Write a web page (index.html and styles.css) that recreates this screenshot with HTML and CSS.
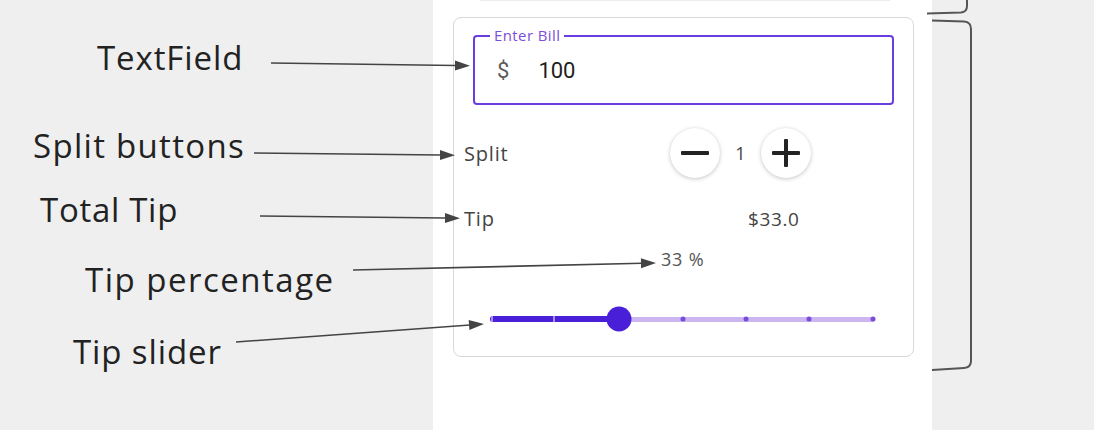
FILE: index.html
```html
<!DOCTYPE html>
<html lang="en">
<head>
<meta charset="utf-8">
<title>Tip calculator anatomy</title>
<link rel="stylesheet" href="styles.css">
</head>
<body>
<div class="page">
  <div class="annot">
    <span class="note note-field">TextField</span>
    <span class="note note-split">Split buttons</span>
    <span class="note note-total">Total Tip</span>
    <span class="note note-pct">Tip percentage</span>
    <span class="note note-slider">Tip slider</span>
  </div>

  <div class="panel">
    <div class="prev-edge"></div>
    <div class="card">
      <div class="field">
        <span class="field-label">Enter Bill</span>
        <span class="field-prefix">$</span>
        <span class="field-value">100</span>
      </div>

      <div class="row split-row">
        <span class="row-label">Split</span>
        <div class="stepper">
          <button class="round-btn" aria-label="decrease"><span class="bar-h"></span></button>
          <span class="count">1</span>
          <button class="round-btn" aria-label="increase"><span class="bar-h"></span><span class="bar-v"></span></button>
        </div>
      </div>

      <div class="row tip-row">
        <span class="row-label">Tip</span>
        <span class="tip-value">$33.0</span>
      </div>

      <div class="pct-row">33 %</div>

      <div class="slider">
        <div class="track"></div>
        <div class="track-active" style="width: 33.4%"></div>
        <span class="tick tick-on" style="left: 0.4%"></span>
        <span class="tick tick-on" style="left: 16.7%"></span>
        <span class="tick tick-off" style="left: 50.1%"></span>
        <span class="tick tick-off" style="left: 66.5%"></span>
        <span class="tick tick-off" style="left: 82.9%"></span>
        <span class="tick tick-off" style="left: 99.5%"></span>
        <span class="thumb" style="left: 33.4%"></span>
      </div>
    </div>
  </div>

  <div class="side"></div>

  <svg class="overlay" width="1094" height="430" viewBox="0 0 1094 430">
    <g class="arrow-line">
      <line x1="271" y1="63" x2="456" y2="65.5"/>
      <line x1="254" y1="153" x2="441" y2="155"/>
      <line x1="260" y1="216" x2="446" y2="218"/>
      <line x1="353" y1="270" x2="642" y2="263.3"/>
      <line x1="236" y1="342" x2="470" y2="325"/>
    </g>
    <g class="arrow-head">
      <polygon points="470,65.7 455,60.5 455,70.5"/>
      <polygon points="455,155.2 440,150 440,160"/>
      <polygon points="460,218.2 445,213 445,223"/>
      <polygon points="656,263 641.1,268.3 640.9,258.3"/>
      <polygon points="484,324 469.4,330 468.7,320"/>
    </g>
    <g class="bracket">
      <path d="M 927 13.5 L 961 12.5 Q 967 12 967 6 L 967 0"/>
      <path d="M 932 20.5 L 964 21.5 Q 971 22 971 29 L 971 361 Q 971 367.5 964 368 L 932 370"/>
    </g>
  </svg>
</div>
</body>
</html>
```

FILE: styles.css
```css
* {
  box-sizing: border-box;
}

html, body {
  margin: 0;
  padding: 0;
}

body {
  width: 1094px;
  height: 430px;
  overflow: hidden;
  background: #efefef;
  font-family: "Open Sans", "Noto Sans", sans-serif;
  color: #222;
}

.page {
  position: relative;
  display: flex;
  width: 1094px;
  height: 430px;
}

/* ---------- annotation column ---------- */
.annot {
  position: relative;
  width: 433px;
  flex: none;
}

.note {
  position: absolute;
  font-size: 33px;
  line-height: 40px;
  letter-spacing: 1.3px;
  color: #222;
  white-space: nowrap;
}

.note-field  { left: 97px; top: 38px; letter-spacing: 0.9px; }
.note-split  { left: 33px; top: 126px; }
.note-total  { left: 40px; top: 190px; letter-spacing: 0.7px; }
.note-pct    { left: 85px; top: 260px; letter-spacing: 1.5px; }
.note-slider { left: 73px; top: 332px; letter-spacing: 0.9px; }

/* ---------- phone panel ---------- */
.panel {
  width: 499px;
  flex: none;
  background: #ffffff;
}

.prev-edge {
  height: 1px;
  margin: 0 42px 0 47px;
  border-bottom: 1px solid #ececec;
}

.card {
  width: 461px;
  height: 340px;
  margin: 16px 0 0 20px;
  border: 1px solid #d8d8d8;
  border-radius: 8px;
  display: flex;
  flex-direction: column;
}

/* text field */
.field {
  position: relative;
  height: 70px;
  margin: 17px 19px 0 19px;
  border: 2px solid #6a3de0;
  border-radius: 4px;
  display: flex;
  align-items: center;
  padding-left: 22px;
}

.field-label {
  position: absolute;
  left: 15px;
  top: -11px;
  padding: 0 4px;
  background: #fff;
  color: #7b4fd9;
  font-size: 15px;
  line-height: 18px;
  letter-spacing: 0.4px;
}

.field-prefix {
  font-family: Roboto, "Noto Sans", sans-serif;
  font-size: 22px;
  color: #5c5c5c;
}

.field-value {
  margin-left: 29px;
  font-family: Roboto, "Noto Sans", sans-serif;
  font-size: 22px;
  color: #1e1e1e;
}

/* rows */
.row {
  display: grid;
  align-items: center;
  padding-left: 10px;
}

.row-label {
  font-size: 20px;
  letter-spacing: 0.8px;
  color: #444;
}

.split-row {
  margin-top: 23px;
  height: 50px;
  grid-template-columns: 206px auto;
}

.stepper {
  display: flex;
  align-items: center;
}

.round-btn {
  position: relative;
  width: 50px;
  height: 50px;
  padding: 0;
  border: none;
  border-radius: 50%;
  background: #fff;
  box-shadow: 0 1px 4px rgba(0, 0, 0, 0.22), 0 0 1px rgba(0, 0, 0, 0.08);
  display: flex;
  align-items: center;
  justify-content: center;
}

.bar-h,
.bar-v {
  position: absolute;
  background: #232323;
  border-radius: 1px;
}

.bar-h {
  width: 28px;
  height: 4px;
}

.bar-v {
  width: 4px;
  height: 28px;
}

.count {
  width: 41px;
  text-align: center;
  font-size: 18px;
  color: #444;
}

.tip-row {
  margin-top: 27px;
  height: 24px;
  grid-template-columns: 284px auto;
}

.tip-value {
  font-size: 19px;
  letter-spacing: 0.6px;
  color: #444;
}

.pct-row {
  margin-top: 20px;
  height: 20px;
  line-height: 20px;
  padding-left: 207px;
  font-size: 18px;
  letter-spacing: 0.8px;
  color: #555;
}

/* slider */
.slider {
  position: relative;
  margin: 35px 0 0 36px;
  width: 385px;
  height: 30px;
}

.track {
  position: absolute;
  left: 0;
  right: 0;
  top: 13px;
  height: 5px;
  border-radius: 3px;
  background: #ccb6f2;
}

.track-active {
  position: absolute;
  left: 0;
  top: 12px;
  height: 6px;
  border-radius: 3px;
  background: #4a1fd8;
}

.tick {
  position: absolute;
  top: 15px;
  transform: translate(-50%, -50%);
}

.tick-on {
  width: 2px;
  height: 6px;
  background: #a88ef0;
}

.tick-off {
  width: 5px;
  height: 5px;
  border-radius: 50%;
  background: #7a4ad8;
}

.thumb {
  position: absolute;
  top: 15px;
  width: 25px;
  height: 25px;
  border-radius: 50%;
  background: #4a1fd8;
  transform: translate(-50%, -50%);
}

.side {
  flex: 1;
}

/* overlay diagram marks */
.overlay {
  position: absolute;
  left: 0;
  top: 0;
  pointer-events: none;
}

.arrow-line line {
  stroke: #444;
  stroke-width: 1.6;
}

.arrow-head polygon {
  fill: #444;
}

.bracket path {
  fill: none;
  stroke: #555;
  stroke-width: 2;
}
```
